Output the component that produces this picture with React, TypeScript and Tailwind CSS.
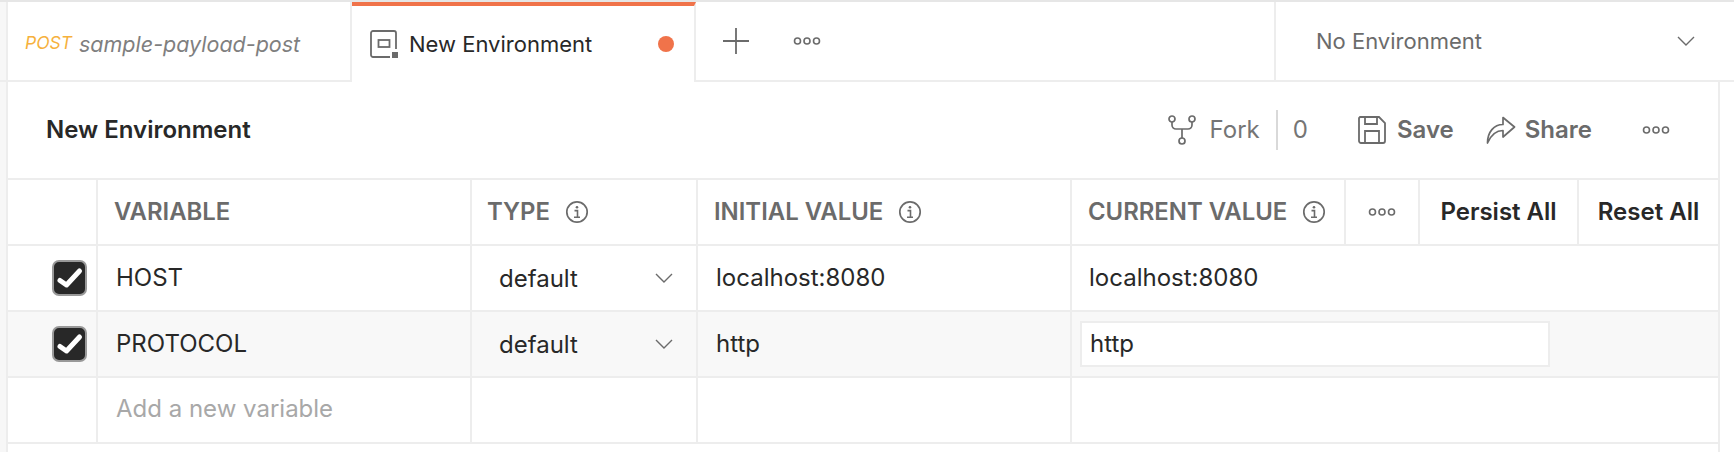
const border = "border-[#ededed]";

function Dots({ className = "" }: { className?: string }) {
  return (
    <svg width="28" height="10" viewBox="0 0 28 10" fill="none" stroke="#6b6b6b" strokeWidth="1.6" className={className}>
      <circle cx="4.5" cy="5" r="3" />
      <circle cx="14" cy="5" r="3" />
      <circle cx="23.5" cy="5" r="3" />
    </svg>
  );
}

function Info() {
  return (
    <svg width="24" height="24" viewBox="0 0 24 24" fill="none" stroke="#6b6b6b" className="shrink-0">
      <circle cx="12" cy="12" r="10.2" strokeWidth="1.7" />
      <circle cx="12" cy="7.2" r="1.3" fill="#6b6b6b" stroke="none" />
      <path d="M9.5 10.6h3v6.4M9 17.2h6" strokeWidth="1.6" />
    </svg>
  );
}

function Chevron() {
  return (
    <svg width="18" height="10" viewBox="0 0 18 10" fill="none" stroke="#6b6b6b" strokeWidth="1.4">
      <path d="M1 1l8 8 8-8" />
    </svg>
  );
}

function Check() {
  return (
    <div className="w-[35px] h-[36px] rounded-[7px] bg-[#282828] border-2 border-[#999999] flex items-center justify-center">
      <svg width="31" height="32" viewBox="0 0 31 32" fill="none" stroke="#fff" strokeWidth="5" strokeLinecap="round" strokeLinejoin="round">
        <path d="M6 18.5l6.5 4.5L25.5 9" />
      </svg>
    </div>
  );
}

function HeadCell({ label, width, pad, info }: { label: string; width: string; pad: string; info?: boolean }) {
  return (
    <div className={`${width} ${pad} shrink-0 h-full flex items-center gap-[15px] border-r-2 ${border}`}>
      <span className="text-[23.9px] font-semibold text-[#6b6b6b]">{label}</span>
      {info && <Info />}
    </div>
  );
}

function Row({ name, value, current, shaded }: { name: string; value: string; current: React.ReactNode; shaded?: boolean }) {
  return (
    <div className={`flex h-[66px] border-b-2 ${border} ${shaded ? "bg-[#f8f8f8]" : "bg-white"}`}>
      <div className={`w-[90px] shrink-0 flex items-center justify-end pr-[9px] border-r-2 ${border}`}>
        <Check />
      </div>
      <div className={`w-[374px] shrink-0 flex items-center pl-[18px] text-[#282828] border-r-2 ${border}`}>{name}</div>
      <div className={`w-[226px] shrink-0 flex items-center justify-between pl-[27px] pr-[23px] text-[#282828] border-r-2 ${border}`}>
        <span className="pt-[2px]">default</span>
        <Chevron />
      </div>
      <div className={`w-[374px] shrink-0 flex items-center pl-[18px] text-[#282828] border-r-2 ${border}`}>{value}</div>
      <div className="flex-1 flex items-center text-[#282828]">{current}</div>
    </div>
  );
}

export default function App() {
  return (
    <div className="w-[1734px] h-[452px] bg-white flex flex-col overflow-hidden text-[24px] font-['Inter',sans-serif]">
      <div className="h-[2px] shrink-0 bg-[#e6e6e6]" />

      {/* tab bar */}
      <div className="flex h-[80px] shrink-0">
        <div className={`w-[8px] shrink-0 bg-[#f7f7f7] border-r-2 border-b-2 ${border}`} />
        <div className={`w-[344px] shrink-0 flex items-center pl-[17px] pt-[6px] italic border-r-2 border-b-2 ${border}`}>
          <span className="text-[17.5px] text-[#f6b13c] w-[54px] pb-[2px]">POST</span>
          <span className="text-[21.5px] text-[#7f7f7f]">sample-payload-post</span>
        </div>
        <div className={`w-[344px] shrink-0 border-t-[4px] border-t-[#f0734a] border-r-2 ${border} flex items-center pl-[18px] pr-[20px]`}>
          <svg width="28" height="28" viewBox="0 0 28 28" fill="none" stroke="#6b6b6b" strokeWidth="1.8" className="shrink-0">
            <path d="M20 27H3a2 2 0 0 1-2-2V3a2 2 0 0 1 2-2h21a2 2 0 0 1 2 2v16" />
            <rect x="8.5" y="10" width="11" height="7" />
            <rect x="22" y="22" width="6" height="6" fill="#6b6b6b" stroke="none" />
          </svg>
          <span className="ml-[11px] text-[22px] text-[#282828]">New Environment</span>
          <span className="ml-auto w-[16px] h-[16px] rounded-full bg-[#f0734a]" />
        </div>
        <div className={`flex-1 flex items-center border-b-2 ${border}`}>
          <svg width="26" height="26" viewBox="0 0 26 26" stroke="#6b6b6b" strokeWidth="1.8" className="ml-[27px]">
            <path d="M13 0v26M0 13h26" />
          </svg>
          <Dots className="ml-[44px]" />
        </div>
        <div className={`w-[460px] shrink-0 flex items-center justify-between pl-[40px] pr-[39px] border-l-2 border-b-2 ${border}`}>
          <span className="text-[22px] text-[#6b6b6b] pt-[1px]">No Environment</span>
          <Chevron />
        </div>
      </div>

      {/* panel */}
      <div className="flex flex-1 min-h-0">
        <div className={`w-[8px] shrink-0 bg-[#f7f7f7] border-r-2 ${border}`} />
        <div className={`w-[1712px] shrink-0 border-r-2 ${border}`}>
          <div className={`h-[98px] flex items-center pl-[38px] border-b-2 ${border}`}>
            <h1 className="text-[24px] font-semibold text-[#282828]">New Environment</h1>
            <div className="ml-auto flex items-center">
              <svg width="28" height="30" viewBox="0 0 28 30" fill="none" stroke="#6b6b6b" strokeWidth="1.7">
                <circle cx="4" cy="4" r="3" />
                <circle cx="24" cy="4" r="3" />
                <circle cx="14" cy="26" r="3" />
                <path d="M4 7v3a4 4 0 0 0 4 4h12a4 4 0 0 0 4-4V7M14 14v9" />
              </svg>
              <span className="ml-[14px] text-[#757575]">Fork</span>
              <span className="ml-[16px] w-[2px] h-[40px] bg-[#d9d9d9]" />
              <span className="ml-[15px] text-[#757575]">0</span>
              <svg width="28" height="28" viewBox="0 0 28 28" fill="none" stroke="#6b6b6b" strokeWidth="1.8" className="ml-[50px]">
                <path d="M2 1h19l6 6v18a2 2 0 0 1-2 2H3a2 2 0 0 1-2-2V2z" />
                <path d="M7 1v7h12V1M7 27V15h14v12" />
              </svg>
              <span className="ml-[11px] font-semibold text-[#6b6b6b]">Save</span>
              <svg width="30" height="28" viewBox="0 0 30 28" fill="none" stroke="#6b6b6b" strokeWidth="1.7" strokeLinejoin="round" className="ml-[32px]">
                <path d="M1.5 27C1.5 16 8 8.5 17 8.5V1.5L28.5 11 17 21v-6.5C10 14.5 5 19 1.5 27z" />
              </svg>
              <span className="ml-[9px] font-semibold text-[#6b6b6b]">Share</span>
              <Dots className="ml-[50px] mr-[48px]" />
            </div>
          </div>

          <div className={`flex h-[66px] border-b-2 ${border}`}>
            <div className={`w-[90px] shrink-0 border-r-2 ${border}`} />
            <HeadCell label="VARIABLE" width="w-[374px]" pad="pl-[16px]" />
            <HeadCell label="TYPE" width="w-[226px]" pad="pl-[15px]" info />
            <HeadCell label="INITIAL VALUE" width="w-[374px]" pad="pl-[16px]" info />
            <HeadCell label="CURRENT VALUE" width="w-[274px]" pad="pl-[16px]" info />
            <div className={`w-[74px] shrink-0 flex items-center justify-center border-r-2 ${border}`}>
              <Dots />
            </div>
            <div className={`w-[159px] shrink-0 flex items-center justify-center font-semibold text-[#282828] border-r-2 ${border}`}>Persist All</div>
            <div className="flex-1 flex items-center justify-center font-semibold text-[#282828]">Reset All</div>
          </div>

          <Row name="HOST" value="localhost:8080" current={<span className="pl-[17px]">localhost:8080</span>} />
          <Row
            name="PROTOCOL"
            value="http"
            shaded
            current={
              <div className={`ml-[8px] w-[470px] h-[46px] flex items-center pl-[8px] bg-white border-2 ${border}`}>http</div>
            }
          />
          <div className={`flex h-[66px] border-b-2 ${border}`}>
            <div className={`w-[90px] shrink-0 border-r-2 ${border}`} />
            <div className={`w-[374px] shrink-0 flex items-center pl-[18px] pb-[2px] text-[#a8a8a8] border-r-2 ${border}`}>Add a new variable</div>
            <div className={`w-[226px] shrink-0 border-r-2 ${border}`} />
            <div className={`w-[374px] shrink-0 border-r-2 ${border}`} />
          </div>
        </div>
      </div>
    </div>
  );
}
